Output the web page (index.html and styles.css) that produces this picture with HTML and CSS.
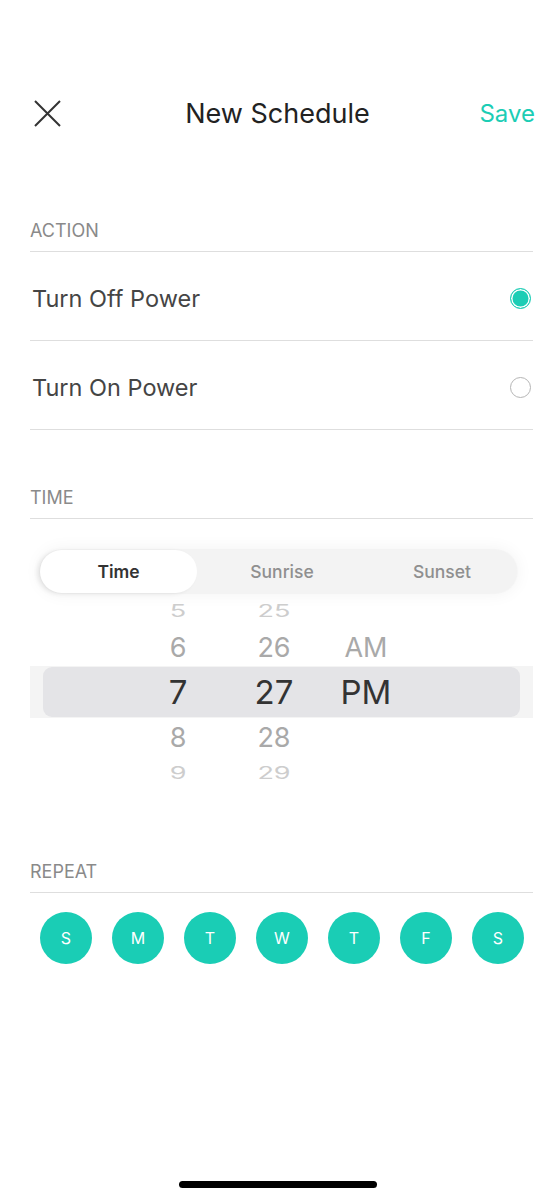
FILE: index.html
```html
<!DOCTYPE html>
<html lang="en">
<head>
<meta charset="utf-8">
<title>New Schedule</title>
<link rel="stylesheet" href="styles.css">
</head>
<body>
<div class="screen">
  <header class="header">
    <button class="close" aria-label="Close">
      <svg width="27" height="27" viewBox="0 0 27 27"><path d="M1 1 L26 26 M26 1 L1 26" stroke="#333" stroke-width="2" fill="none"/></svg>
    </button>
    <h1 class="title">New Schedule</h1>
    <button class="save">Save</button>
  </header>

  <main class="content">
    <div class="section-label first">ACTION</div>
    <div class="option">
      <span class="option-text">Turn Off Power</span>
      <span class="radio checked"></span>
    </div>
    <div class="option">
      <span class="option-text">Turn On Power</span>
      <span class="radio"></span>
    </div>

    <div class="section-label time-label">TIME</div>
    <div class="segmented">
      <div class="seg active">Time</div>
      <div class="seg">Sunrise</div>
      <div class="seg">Sunset</div>
    </div>

    <div class="picker">
      <div class="prow far r5"><span class="c1">5</span><span class="c2">25</span><span class="c3"></span></div>
      <div class="prow near r6"><span class="c1">6</span><span class="c2">26</span><span class="c3">AM</span></div>
      <div class="prow sel">
        <div class="sel-inner"><span class="c1">7</span><span class="c2">27</span><span class="c3">PM</span></div>
      </div>
      <div class="prow near r8"><span class="c1">8</span><span class="c2">28</span><span class="c3"></span></div>
      <div class="prow far r9"><span class="c1">9</span><span class="c2">29</span><span class="c3"></span></div>
    </div>

    <div class="section-label repeat-label">REPEAT</div>
    <div class="days">
      <span class="day">S</span>
      <span class="day">M</span>
      <span class="day">T</span>
      <span class="day">W</span>
      <span class="day">T</span>
      <span class="day">F</span>
      <span class="day">S</span>
    </div>
  </main>

  <div class="home-indicator"></div>
</div>
</body>
</html>
```

FILE: styles.css
```css
* { box-sizing: border-box; }
html, body { margin: 0; padding: 0; background: #fff; }
body { font-family: Inter, Roboto, "Noto Sans", "Liberation Sans", sans-serif; color: #333; }

.screen {
  width: 555px;
  min-height: 1200px;
  display: flex;
  flex-direction: column;
}

.header {
  display: grid;
  grid-template-columns: 1fr auto 1fr;
  align-items: center;
  height: 140px;
  padding: 87px 20px 0 20px;
}
.header > * { height: 53px; display: flex; align-items: center; }
.close {
  background: none; border: 0; padding: 0; margin: 0 0 0 14px;
  justify-self: start;
}
.close svg { display: block; }
.title {
  margin: 0;
  font-size: 27px;
  font-weight: 400;
  color: #222;
}
.save {
  justify-self: end;
  background: none; border: 0; padding: 0;
  font-family: inherit;
  font-size: 24px;
  color: #1ccdb5;
}

.content {
  padding: 0 22px 0 30px;
}

.section-label {
  font-size: 18px;
  line-height: 20px;
  color: #8a8a8a;
  padding-bottom: 10px;
  border-bottom: 1px solid #dedede;
}
.section-label.first { padding-top: 81px; }
.section-label.time-label { padding-top: 58px; }
.section-label.repeat-label { padding-top: 72px; }

.option {
  height: 89px;
  display: flex;
  align-items: center;
  justify-content: space-between;
  padding: 5px 2px 0 2px;
  border-bottom: 1px solid #dedede;
}
.option-text {
  font-size: 23.5px;
  color: #454545;
}
.radio {
  width: 21px; height: 21px;
  border-radius: 50%;
  border: 1px solid #b5b5b5;
}
.radio.checked {
  border: 1.5px solid #1ccdb5;
  background: #1ccdb5;
  box-shadow: inset 0 0 0 1.5px #fff;
}

.segmented {
  margin: 31px 0 0 10px;
  width: 477px;
  height: 43px;
  display: grid;
  grid-template-columns: 157px 170px 1fr;
  background: #f3f3f3;
  border-radius: 22px;
  box-shadow: 0 0 18px rgba(0,0,0,0.06), 0 0 0 1px rgba(0,0,0,0.02);
}
.seg {
  display: flex;
  align-items: center;
  justify-content: center;
  font-size: 17.5px;
  font-weight: 500;
  color: #8f8f8f;
}
.seg.active {
  background: #fff;
  border-radius: 22px;
  color: #333;
  font-weight: 600;
  box-shadow: -3px 1px 4px rgba(0,0,0,0.08);
}

.picker { display: flex; flex-direction: column; }
.prow, .sel-inner {
  display: grid;
  grid-template-columns: 118px 60px 36px 60px 32px 60px 1fr;
  align-items: center;
  line-height: 1;
}
.c1 { grid-column: 2; text-align: center; }
.c2 { grid-column: 4; text-align: center; }
.c3 { grid-column: 6; text-align: center; }
.prow.r5 { height: 36px; }
.prow.r6 { height: 37px; }
.prow.r8 { height: 38px; }
.prow.r9 { height: 34px; }
.prow.near { font-size: 27px; color: #a9a9a9; }
.prow.far { font-size: 27px; color: #cdcdcd; }
.prow.far span { display: block; transform: scaleY(0.62); }
.prow.sel {
  display: block;
  height: 52px;
  background: #f4f4f4;
  padding: 1px 13px;
}
.sel-inner {
  height: 50px;
  background: #e4e4e7;
  border-radius: 9px;
  grid-template-columns: 105px 60px 36px 60px 32px 60px 1fr;
  font-size: 33px;
  color: #333;
}

.days {
  display: flex;
  gap: 20px;
  margin: 19px 0 0 10px;
}
.day {
  width: 52px; height: 52px;
  border-radius: 50%;
  background: #1acdb5;
  color: #fff;
  font-size: 16px;
  display: flex;
  align-items: center;
  justify-content: center;
}

.home-indicator {
  margin: auto auto 12px;
  width: 198px;
  height: 7px;
  border-radius: 4px;
  background: #000;
}
```
